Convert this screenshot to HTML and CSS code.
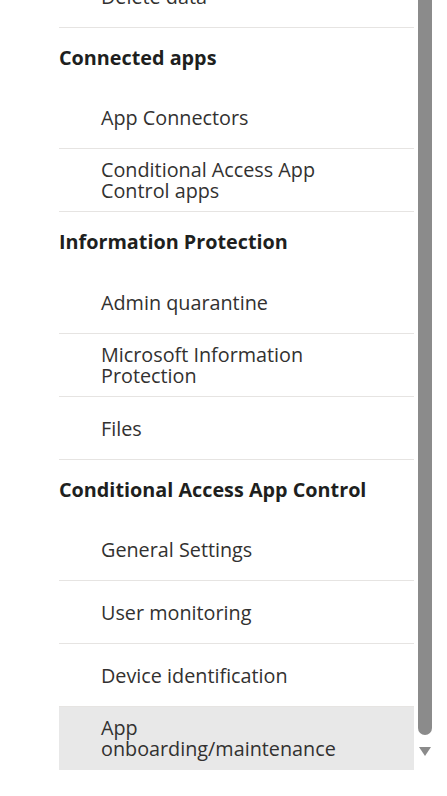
FILE: index.html
```html
<!DOCTYPE html>
<html lang="en">
<head>
<meta charset="utf-8">
<title>Settings navigation</title>
<link rel="stylesheet" href="styles.css">
</head>
<body>
<div class="page">
  <nav class="menu">
    <div class="item">Delete data</div>
    <div class="heading">Connected apps</div>
    <div class="item">App Connectors</div>
    <div class="item">Conditional Access App Control apps</div>
    <div class="heading tall">Information Protection</div>
    <div class="item">Admin quarantine</div>
    <div class="item">Microsoft Information Protection</div>
    <div class="item">Files</div>
    <div class="heading">Conditional Access App Control</div>
    <div class="item">General Settings</div>
    <div class="item">User monitoring</div>
    <div class="item">Device identification</div>
    <div class="item selected">App onboarding/maintenance</div>
  </nav>
  <div class="scrollbar">
    <div class="thumb"></div>
    <div class="arrow"></div>
  </div>
</div>
</body>
</html>
```

FILE: styles.css
```css
html, body {
  margin: 0;
  padding: 0;
  background: #ffffff;
  overflow: hidden;
}

body {
  font-family: "Open Sans", "Noto Sans", "Liberation Sans", sans-serif;
  color: #323130;
}

.page {
  display: flex;
  align-items: flex-start;
  padding-left: 59px;
  gap: 4px;
  height: 796px;
  overflow: hidden;
}

.menu {
  width: 355px;
  margin-top: -35px;
  display: flex;
  flex-direction: column;
}

.item {
  display: flex;
  align-items: center;
  height: 63px;
  box-sizing: border-box;
  padding: 10px 50px 10px 42px;
  border-bottom: 1px solid #e6e4e2;
  font-size: 19.8px;
  line-height: 21px;
  color: #323130;
}

.item.selected {
  background: #e8e8e8;
  border-bottom-color: #e8e8e8;
}

.heading {
  display: flex;
  align-items: center;
  height: 58px;
  font-size: 19.8px;
  font-weight: 700;
  color: #201f1e;
}

.heading.tall {
  height: 59px;
}

.scrollbar {
  width: 14px;
  display: flex;
  flex-direction: column;
  align-items: center;
}

.thumb {
  width: 14px;
  height: 735px;
  background: #8b8b8b;
  border-radius: 0 0 7px 7px;
}

.arrow {
  margin-top: 12px;
  width: 0;
  height: 0;
  border-left: 6px solid transparent;
  border-right: 6px solid transparent;
  border-top: 9px solid #8b8b8b;
}
```
